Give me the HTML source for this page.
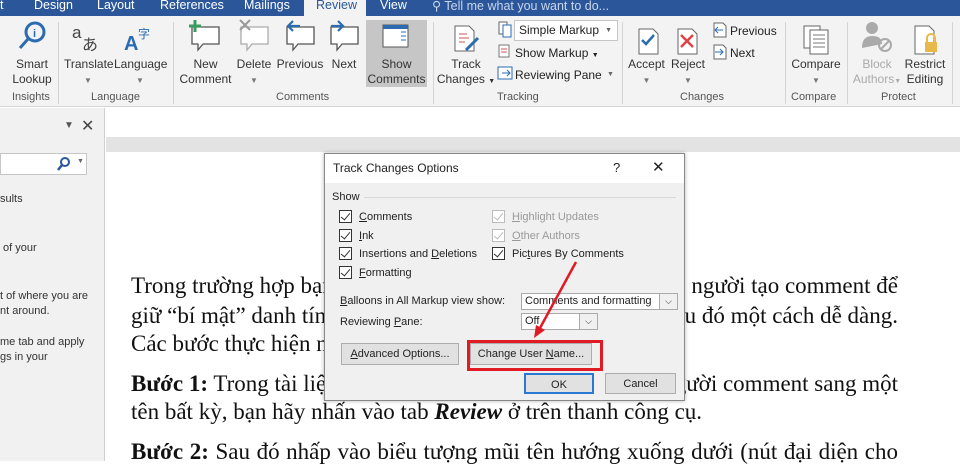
<!DOCTYPE html>
<html><head><meta charset="utf-8"><style>
*{margin:0;padding:0;box-sizing:border-box}
body{width:960px;height:461px;overflow:hidden;position:relative;background:#fff;font-family:"Liberation Sans",sans-serif;font-size:12px;color:#222}
.a{position:absolute;white-space:nowrap}
.tab{position:absolute;top:-2px;color:#fff;font-size:12.5px}
.lb{position:absolute;text-align:center;font-size:12px;line-height:15px;color:#333;white-space:nowrap}
.gl{position:absolute;top:91px;font-size:11px;color:#555}
.sep{position:absolute;top:22px;width:1px;height:82px;background:#d4d4d4}
.d{position:absolute;font-family:"Liberation Serif",serif;font-size:23px;color:#111;white-space:nowrap;line-height:26px}
.dr{right:62px}
.dj{left:131px;width:767px;text-align:justify;text-align-last:justify}
.cb{position:absolute;width:13px;height:13px;border:1px solid #333;background:#fff}
.cb:after{content:"";position:absolute;left:3px;top:0px;width:4px;height:8px;border:solid #333;border-width:0 1.5px 1.5px 0;transform:rotate(40deg)}
.cb.g{border-color:#bbb}.cb.g:after{border-color:#bbb}
.dl{position:absolute;font-size:11px;color:#222;white-space:nowrap}
.btn{position:absolute;background:#e1e1e1;border:1px solid #adadad;font-size:11px;text-align:center;line-height:20px;white-space:nowrap}
</style></head><body>
<div class="a" style="left:0;top:0;width:960px;height:16px;background:#2b579a"></div>
<div class="tab" style="left:0">t</div>
<div class="tab" style="left:34px">Design</div>
<div class="tab" style="left:97px">Layout</div>
<div class="tab" style="left:160px">References</div>
<div class="tab" style="left:244px">Mailings</div>
<div class="a" style="left:304px;top:0;width:62px;height:17px;background:#f3f3f3"></div>
<div class="tab" style="left:316px;color:#2b579a">Review</div>
<div class="tab" style="left:380px">View</div>
<div class="tab" style="left:432px;color:#c9d6ec">&#9906; Tell me what you want to do...</div>
<div class="a" style="left:0;top:16px;width:960px;height:91px;background:#f3f3f3;border-bottom:1px solid #d5d5d5"></div>
<div class="a" style="left:366px;top:20px;width:61px;height:67px;background:#c6c6c6"></div>
<svg class="a" style="left:0;top:18px" width="960" height="44">
<g fill="none" stroke="#2b6cb0" stroke-width="3"><circle cx="35" cy="14" r="9"/><line x1="28" y1="21" x2="20" y2="30"/></g>
<text x="33" y="19" font-size="11" font-weight="bold" fill="#2b6cb0" font-family="Liberation Sans">i</text>
<text x="72" y="20" font-size="17" fill="#444" font-family="Liberation Sans">a</text>
<text x="82" y="32" font-size="16" fill="#444" font-family="Noto Sans CJK JP">あ</text>
<text x="124" y="32" font-size="20" fill="#2b6cb0" font-family="Liberation Sans" font-weight="bold">A</text>
<text x="138" y="20" font-size="12" fill="#2b6cb0" font-family="Noto Sans CJK JP">字</text>
<g fill="#fff" stroke="#555" stroke-width="1.3">
<path d="M192 9h27v17h-16l-5 6v-6h-6z"/><path d="M241 9h27v17h-16l-5 6v-6h-6z" stroke="#aaa"/>
<path d="M287 9h27v17h-16l-5 6v-6h-6z"/><path d="M331 9h27v17h-16l-5 6v-6h-6z"/></g>
<path d="M195 2v12M189 8h12" stroke="#3c9a5f" stroke-width="3"/>
<path d="M240 2l10 10M250 2l-10 10" stroke="#999" stroke-width="2"/>
<path d="M300 8h-12m5-5l-5 5 5 5" stroke="#2b6cb0" stroke-width="2.2" fill="none"/>
<path d="M331 8h12m-5-5l5 5-5 5" stroke="#2b6cb0" stroke-width="2.2" fill="none"/>
<rect x="383" y="7" width="25" height="22" fill="#fff" stroke="#555"/><rect x="383" y="7" width="25" height="4" fill="#2b6cb0"/>
<path d="M401 14h5M401 18h5M401 22h5" stroke="#2b6cb0"/>
<path d="M455 8h14l5 5v20h-19z" fill="#fff" stroke="#666"/><path d="M459 16h8M459 20h10M459 24h6" stroke="#c55"/><path d="M466 32l12-12" stroke="#2b6cb0" stroke-width="3"/>
<path d="M639 11h14l5 5v20h-19z" fill="#fff" stroke="#666"/><path d="M642 22l4 4 8-9" stroke="#2b6cb0" stroke-width="2.5" fill="none"/>
<path d="M678 11h14l5 5v20h-19z" fill="#fff" stroke="#666"/><path d="M681 17l12 12M693 17l-12 12" stroke="#d44" stroke-width="2.5"/>
<path d="M804 8h16v22h-16z" fill="#fff" stroke="#666"/><path d="M810 12h18v24h-18z" fill="#fff" stroke="#666"/><path d="M813 17h12M813 21h12M813 25h12M813 29h12" stroke="#777"/>
<circle cx="872" cy="10" r="6" fill="#aaa"/><path d="M862 30q0-12 10-12t10 8" fill="#aaa"/><circle cx="885" cy="27" r="6" fill="none" stroke="#aaa" stroke-width="2"/><path d="M881 31l8-8" stroke="#aaa" stroke-width="2"/>
<path d="M915 8h14l5 5v23h-19z" fill="#fff" stroke="#666"/><rect x="925" y="24" width="12" height="10" fill="#e8b84a"/><path d="M927 24v-4a4 4 0 0 1 8 0v4" fill="none" stroke="#e8b84a" stroke-width="2"/>
</svg>
<div class="lb" style="left:12px;top:57px;width:40px">Smart<br>Lookup</div>
<div class="lb" style="left:64px;top:57px;width:48px">Translate<br><span style="font-size:8px;color:#777">▼</span></div>
<div class="lb" style="left:114px;top:57px;width:52px">Language<br><span style="font-size:8px;color:#777">▼</span></div>
<div class="lb" style="left:178px;top:57px;width:55px">New<br>Comment</div>
<div class="lb" style="left:236px;top:57px;width:36px">Delete<br><span style="font-size:8px;color:#777">▼</span></div>
<div class="lb" style="left:276px;top:57px;width:48px">Previous</div>
<div class="lb" style="left:329px;top:57px;width:30px">Next</div>
<div class="lb" style="left:366px;top:57px;width:61px">Show<br>Comments</div>
<div class="lb" style="left:434px;top:57px;width:64px">Track<br>Changes <span style="font-size:7px">▼</span></div>
<svg class="a" style="left:497px;top:21px" width="16" height="64"><path d="M2 1h8v12h-8z" fill="#fff" stroke="#666"/><path d="M6 4h8v12h-8z" fill="#fff" stroke="#2b6cb0"/><path d="M2 24h10v12h-10z" fill="#fff" stroke="#777"/><path d="M4 28h6M4 31h6" stroke="#c55"/><rect x="1" y="46" width="14" height="12" fill="#fff" stroke="#2b6cb0"/><path d="M5 52h8m-3-3l3 3-3 3" stroke="#2b6cb0" fill="none"/></svg>
<div class="a" style="left:514px;top:20px;width:104px;height:21px;background:#fff;border:1px solid #c6c6c6;font-size:12px;line-height:19px;padding-left:4px">Simple Markup <span style="position:absolute;right:5px;font-size:7px;color:#666">▼</span></div>
<div class="a" style="left:515px;top:46px;font-size:12px">Show Markup <span style="font-size:7px">▼</span></div>
<div class="a" style="left:515px;top:68px;font-size:12px">Reviewing Pane</div>
<div class="a" style="left:607px;top:71px;font-size:7px;color:#666">▼</div>
<div class="lb" style="left:624px;top:57px;width:45px">Accept<br><span style="font-size:8px;color:#777">▼</span></div>
<div class="lb" style="left:670px;top:57px;width:36px">Reject<br><span style="font-size:8px;color:#777">▼</span></div>
<svg class="a" style="left:712px;top:22px" width="16" height="40"><path d="M2 1h9l3 3v11h-12z" fill="#fff" stroke="#666"/><path d="M11 8h-8m3-3l-3 3 3 3" stroke="#2b6cb0" fill="none"/><path d="M2 23h9l3 3v11h-12z" fill="#fff" stroke="#666"/><path d="M3 30h8m-3-3l3 3-3 3" stroke="#2b6cb0" fill="none"/></svg>
<div class="a" style="left:730px;top:24px;font-size:12px">Previous</div>
<div class="a" style="left:730px;top:46px;font-size:12px">Next</div>
<div class="lb" style="left:790px;top:57px;width:52px">Compare<br><span style="font-size:8px;color:#777">▼</span></div>
<div class="lb" style="left:850px;top:57px;width:54px;color:#aaa">Block<br>Authors<span style="font-size:7px">▼</span></div>
<div class="lb" style="left:902px;top:57px;width:46px">Restrict<br>Editing</div>
<div class="gl" style="left:12px">Insights</div>
<div class="gl" style="left:91px">Language</div>
<div class="gl" style="left:276px">Comments</div>
<div class="gl" style="left:497px">Tracking</div>
<div class="gl" style="left:680px">Changes</div>
<div class="gl" style="left:791px">Compare</div>
<div class="gl" style="left:881px">Protect</div>
<div class="sep" style="left:58px"></div><div class="sep" style="left:173px"></div><div class="sep" style="left:433px"></div><div class="sep" style="left:622px"></div><div class="sep" style="left:785px"></div><div class="sep" style="left:847px"></div><div class="sep" style="left:952px"></div>
<div class="a" style="left:0;top:108px;width:105px;height:353px;background:#f1f1f1;border-right:1px solid #d0d0d0"></div>
<div class="a" style="left:64px;top:120px;font-size:10px;color:#555">▼</div>
<div class="a" style="left:81px;top:116px;font-size:16px;color:#444">✕</div>
<div class="a" style="left:0;top:153px;width:87px;height:22px;background:#fff;border:1px solid #c6c6c6"></div>
<svg class="a" style="left:56px;top:156px" width="16" height="16"><circle cx="9" cy="6" r="4" fill="none" stroke="#2b579a" stroke-width="2"/><path d="M6 9l-4 5" stroke="#2b579a" stroke-width="2.5"/></svg>
<div class="a" style="left:77px;top:158px;font-size:7px;color:#666">▼</div>
<div class="a" style="left:0;top:193px;font-size:11px;color:#333">sults</div>
<div class="a" style="left:0;top:242px;font-size:11px;color:#333">&nbsp;of your</div>
<div class="a" style="left:0;top:289px;font-size:11px;color:#333;line-height:15px">t of where you are<br>nt around.</div>
<div class="a" style="left:0;top:335px;font-size:11px;color:#333;line-height:15px">me tab and apply<br>gs in your</div>
<div class="a" style="left:106px;top:137px;width:854px;height:15px;background:#e3e3e3"></div>
<div class="d" style="left:131px;top:273px">Trong trường hợp bạn không muốn để lộ tên</div>
<div class="d dr" style="top:273px">người tạo comment để</div>
<div class="d" style="left:131px;top:303px">giữ “bí mật” danh tính của mình thì</div>
<div class="d dr" style="top:303px">ều đó một cách dễ dàng.</div>
<div class="d" style="left:131px;top:331px">Các bước thực hiện như sau:</div>
<div class="d" style="left:131px;top:371px"><b>Bước 1:</b> Trong tài liệu Word, để đổi tên</div>
<div class="d dr" style="top:371px">gười comment sang một</div>
<div class="d" style="left:131px;top:399px">tên bất kỳ, bạn hãy nhấn vào tab <b><i>Review</i></b> ở trên thanh công cụ.</div>
<div class="d dj" style="top:439px"><b>Bước 2:</b> Sau đó nhấp vào biểu tượng mũi tên hướng xuống dưới (nút đại diện cho</div>
<div class="a" style="left:324px;top:153px;width:361px;height:248px;background:#f0f0f0;border:1px solid #888;box-shadow:0 0 4px rgba(0,0,0,.3)"></div>
<div class="a" style="left:325px;top:154px;width:359px;height:29px;background:#fff"></div>
<div class="a" style="left:333px;top:161px;font-size:12px">Track Changes Options</div>
<div class="a" style="left:613px;top:160px;font-size:13px">?</div>
<div class="a" style="left:652px;top:158px;font-size:15px">✕</div>
<div class="dl" style="left:332px;top:191px">Show</div>
<div class="a" style="left:364px;top:197px;width:312px;height:1px;background:#d8d8d8"></div>
<div class="cb" style="left:339px;top:210px"></div><div class="dl" style="left:359px;top:211px"><u>C</u>omments</div>
<div class="cb" style="left:339px;top:229px"></div><div class="dl" style="left:359px;top:230px"><u>I</u>nk</div>
<div class="cb" style="left:339px;top:247px"></div><div class="dl" style="left:359px;top:248px">Insertions and <u>D</u>eletions</div>
<div class="cb" style="left:339px;top:266px"></div><div class="dl" style="left:359px;top:267px"><u>F</u>ormatting</div>
<div class="cb g" style="left:492px;top:210px"></div><div class="dl" style="left:512px;top:211px;color:#999"><u>H</u>ighlight Updates</div>
<div class="cb g" style="left:492px;top:229px"></div><div class="dl" style="left:512px;top:230px;color:#999"><u>O</u>ther Authors</div>
<div class="cb" style="left:492px;top:247px"></div><div class="dl" style="left:512px;top:248px">Pic<u>t</u>ures By Comments</div>
<div class="dl" style="left:340px;top:295px"><u>B</u>alloons in All Markup view show:</div>
<div class="a" style="left:521px;top:293px;width:157px;height:17px;background:#fff;border:1px solid #aaa;font-size:11px;line-height:15px;padding-left:3px">Comments and formatting</div>
<div class="a" style="left:659px;top:293px;width:19px;height:17px;border:1px solid #aaa;background:#f0f0f0;font-size:9px;text-align:center;line-height:15px">⌵</div>
<div class="dl" style="left:340px;top:316px">Reviewing <u>P</u>ane:</div>
<div class="a" style="left:521px;top:313px;width:77px;height:17px;background:#fff;border:1px solid #aaa;font-size:11px;line-height:15px;padding-left:3px">Off</div>
<div class="a" style="left:579px;top:313px;width:19px;height:17px;border:1px solid #aaa;background:#f0f0f0;font-size:9px;text-align:center;line-height:15px">⌵</div>
<div class="btn" style="left:341px;top:343px;width:118px;height:22px"><u>A</u>dvanced Options...</div>
<div class="btn" style="left:470px;top:343px;width:122px;height:22px">Change User <u>N</u>ame...</div>
<div class="a" style="left:467px;top:340px;width:136px;height:31px;border:3px solid #e01b24"></div>
<div class="btn" style="left:524px;top:373px;width:70px;height:21px;border:2px solid #2a78d4">OK</div>
<div class="btn" style="left:605px;top:373px;width:71px;height:21px">Cancel</div>
<svg class="a" style="left:0;top:0" width="960" height="461"><path d="M576 262L540 328" stroke="#e01b24" stroke-width="2.5"/><path d="M534 338l2-13 9 5z" fill="#e01b24"/></svg>
</body></html>
